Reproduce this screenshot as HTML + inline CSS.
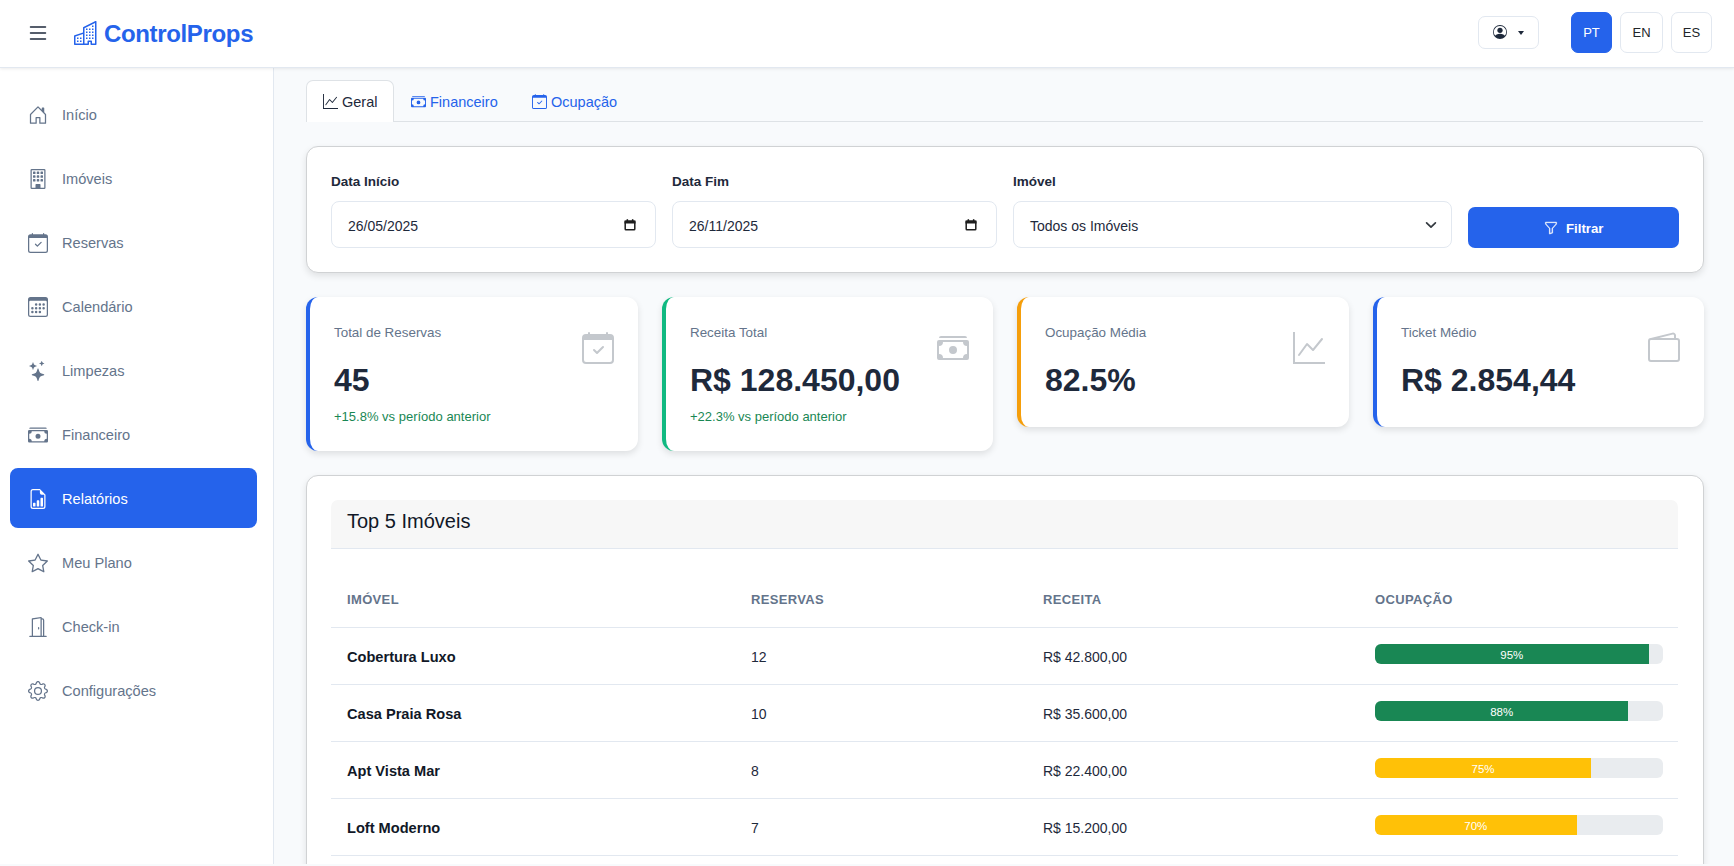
<!DOCTYPE html>
<html lang="pt">
<head>
<meta charset="utf-8">
<title>ControlProps - Relatórios</title>
<style>
*{box-sizing:border-box;margin:0;padding:0}
html,body{width:1734px;height:866px;overflow:hidden}
body{font-family:"Liberation Sans",sans-serif;background:#f8fafc;color:#1e293b;position:relative}
.abs{position:absolute}
svg{display:block}
/* header */
#hdr{position:absolute;left:0;top:0;width:1734px;height:68px;background:#fff;border-bottom:1px solid #e2e8f0;box-shadow:0 1px 3px rgba(0,0,0,.08);z-index:5}
.brand{position:absolute;left:104px;top:19px;font-size:24px;font-weight:700;color:#2563eb;letter-spacing:-0.35px;line-height:30px}
.hbtn{position:absolute;border:1px solid #e2e8f0;border-radius:7px;background:#fff;font-size:13px;color:#212529;text-align:center}
/* sidebar */
#side{position:absolute;left:0;top:68px;width:274px;height:798px;background:#fff;border-right:1px solid #e2e8f0}
.nav{position:absolute;left:10px;width:247px;height:60px;border-radius:8px;color:#64748b;font-size:14.6px}
.nav svg{position:absolute;left:18px;top:21px;width:20px;height:20px;fill:currentColor}
.nav span{position:absolute;left:52px;top:22px;line-height:18px}
.nav.active{background:#2563eb;color:#fff}
/* main */
.tabs{position:absolute;left:306px;top:121px;width:1397px;height:1px;background:#dee2e6}
.tab{position:absolute;top:80px;height:42px;font-size:15px;color:#2563eb}
.tab.active{background:#fff;border:1px solid #dee2e6;border-bottom:none;border-radius:7px 7px 0 0;color:#1e293b}
.ttxt{position:absolute;top:93px;font-size:14.5px;line-height:18px;color:#2563eb;white-space:nowrap}
.card{position:absolute;background:#fff;border:1px solid #d0d2d4;border-radius:12px;box-shadow:0 3px 7px rgba(0,0,0,.1)}
.lbl{position:absolute;top:174px;font-size:13.5px;line-height:16px;font-weight:700;color:#1e293b}
.inp{position:absolute;top:201px;height:47px;border:1px solid #e2e8f0;border-radius:8px;background:#fff;font-size:14px;color:#1e293b}
.inp span{position:absolute;left:16px;top:16px;line-height:16px}
.btnf{position:absolute;left:1468px;top:207px;width:211px;height:41px;background:#2563eb;border-radius:7px;color:#fff;font-size:13.2px;font-weight:700}
.stat{position:absolute;top:297px;background:#fff;border-radius:12px;box-shadow:0 3px 7px rgba(0,0,0,.11);border-left:4px solid #2563eb;overflow:hidden}
.stat .t{position:absolute;left:24px;top:27.5px;font-size:13.4px;color:#64748b;line-height:16px;white-space:nowrap}
.stat .v{position:absolute;left:24px;top:64px;font-size:32px;font-weight:700;color:#1e293b;line-height:38px;white-space:nowrap}
.stat .g{position:absolute;left:24px;top:112px;font-size:13px;color:#198754;line-height:16px;white-space:nowrap}
.stat svg{position:absolute;top:35px;width:32px;height:32px;fill:#c4c8cd}
.th{position:absolute;top:592px;font-size:13px;font-weight:700;color:#64748b;letter-spacing:0.35px;line-height:16px}
.row{position:absolute;left:331px;width:1347px;height:1px;background:#e2e8f0}
.cell{position:absolute;font-size:14px;color:#1e293b;line-height:16px;white-space:nowrap}
.cell.b{font-weight:700;color:#111827;font-size:14.6px}
.bar{position:absolute;left:1375px;width:288px;height:20px;background:#e9ecef;border-radius:6px;overflow:hidden}
.bar div{position:absolute;left:0;top:0;height:20px;color:#fff;font-size:11.5px;text-align:center;line-height:22px}
</style>
</head>
<body>
<div id="hdr">
  <svg class="abs" style="left:26px;top:21px" width="24" height="24" viewBox="0 0 16 16" fill="#1e293b"><path fill-rule="evenodd" d="M2.5 12a.5.5 0 0 1 .5-.5h10a.5.5 0 0 1 0 1H3a.5.5 0 0 1-.5-.5m0-4a.5.5 0 0 1 .5-.5h10a.5.5 0 0 1 0 1H3a.5.5 0 0 1-.5-.5m0-4a.5.5 0 0 1 .5-.5h10a.5.5 0 0 1 0 1H3a.5.5 0 0 1-.5-.5"/></svg>
  <svg class="abs" style="left:74px;top:21px" width="24" height="24" viewBox="0 0 16 16" fill="#2563eb"><path d="M14.763.075A.5.5 0 0 1 15 .5v15a.5.5 0 0 1-.5.5h-3a.5.5 0 0 1-.5-.5V14h-1v1.5a.5.5 0 0 1-.5.5h-9a.5.5 0 0 1-.5-.5V10a.5.5 0 0 1 .342-.474L6 7.64V4.5a.5.5 0 0 1 .276-.447l8-4a.5.5 0 0 1 .487.022M6 8.694 1 10.36V15h5zM7 15h2v-1.5a.5.5 0 0 1 .5-.5h2a.5.5 0 0 1 .5.5V15h2V1.309l-7 3.5z"/><path d="M2 11h1v1H2zm2 0h1v1H4zm-2 2h1v1H2zm2 0h1v1H4zm4-4h1v1H8zm2 0h1v1h-1zm-2 2h1v1H8zm2 0h1v1h-1zm2-2h1v1h-1zm0 2h1v1h-1zM8 7h1v1H8zm2 0h1v1h-1zm2 0h1v1h-1zM8 5h1v1H8zm2 0h1v1h-1zm2 0h1v1h-1zm0-2h1v1h-1z"/></svg>
  <div class="brand">ControlProps</div>
  <div class="hbtn" style="left:1478px;top:16px;width:61px;height:33px">
    <svg class="abs" style="left:14px;top:8px" width="14" height="14" viewBox="0 0 16 16" fill="#1e293b"><path d="M11 6a3 3 0 1 1-6 0 3 3 0 0 1 6 0"/><path fill-rule="evenodd" d="M0 8a8 8 0 1 1 16 0A8 8 0 0 1 0 8m8-7a7 7 0 0 0-5.468 11.37C3.242 11.226 4.805 10 8 10s4.757 1.225 5.468 2.37A7 7 0 0 0 8 1"/></svg>
    <div class="abs" style="left:39px;top:14px;width:0;height:0;border-left:3.5px solid transparent;border-right:3.5px solid transparent;border-top:4px solid #1e293b"></div>
  </div>
  <div class="hbtn" style="left:1571px;top:12px;width:41px;height:41px;background:#2563eb;border-color:#2563eb;color:#fff;line-height:40px">PT</div>
  <div class="hbtn" style="left:1620px;top:12px;width:43px;height:41px;line-height:40px">EN</div>
  <div class="hbtn" style="left:1671px;top:12px;width:41px;height:41px;line-height:40px">ES</div>
</div>

<div id="side">
  <div class="nav" style="top:16px"><svg viewBox="0 0 16 16"><path d="M8.354 1.146a.5.5 0 0 0-.708 0l-6 6A.5.5 0 0 0 1.5 7.5v7a.5.5 0 0 0 .5.5h4.5a.5.5 0 0 0 .5-.5v-4h2v4a.5.5 0 0 0 .5.5H14a.5.5 0 0 0 .5-.5v-7a.5.5 0 0 0-.146-.354L13 5.793V2.5a.5.5 0 0 0-.5-.5h-1a.5.5 0 0 0-.5.5v1.293zM2.5 14V7.707l5.5-5.5 5.5 5.5V14H10v-4a.5.5 0 0 0-.5-.5h-3a.5.5 0 0 0-.5.5v4z"/></svg><span>Início</span></div>
  <div class="nav" style="top:80px"><svg viewBox="0 0 16 16"><path d="M4 2.5a.5.5 0 0 1 .5-.5h1a.5.5 0 0 1 .5.5v1a.5.5 0 0 1-.5.5h-1a.5.5 0 0 1-.5-.5zm3 0a.5.5 0 0 1 .5-.5h1a.5.5 0 0 1 .5.5v1a.5.5 0 0 1-.5.5h-1a.5.5 0 0 1-.5-.5zm3.5-.5a.5.5 0 0 0-.5.5v1a.5.5 0 0 0 .5.5h1a.5.5 0 0 0 .5-.5v-1a.5.5 0 0 0-.5-.5zM4 5.5a.5.5 0 0 1 .5-.5h1a.5.5 0 0 1 .5.5v1a.5.5 0 0 1-.5.5h-1a.5.5 0 0 1-.5-.5zM7.5 5a.5.5 0 0 0-.5.5v1a.5.5 0 0 0 .5.5h1a.5.5 0 0 0 .5-.5v-1a.5.5 0 0 0-.5-.5zm2.5.5a.5.5 0 0 1 .5-.5h1a.5.5 0 0 1 .5.5v1a.5.5 0 0 1-.5.5h-1a.5.5 0 0 1-.5-.5zM4.5 8a.5.5 0 0 0-.5.5v1a.5.5 0 0 0 .5.5h1a.5.5 0 0 0 .5-.5v-1a.5.5 0 0 0-.5-.5zm2.5.5a.5.5 0 0 1 .5-.5h1a.5.5 0 0 1 .5.5v1a.5.5 0 0 1-.5.5h-1a.5.5 0 0 1-.5-.5zm3.5-.5a.5.5 0 0 0-.5.5v1a.5.5 0 0 0 .5.5h1a.5.5 0 0 0 .5-.5v-1a.5.5 0 0 0-.5-.5z"/><path d="M2 1a1 1 0 0 1 1-1h10a1 1 0 0 1 1 1v14a1 1 0 0 1-1 1H3a1 1 0 0 1-1-1zm11 0H3v14h3v-2.5a.5.5 0 0 1 .5-.5h3a.5.5 0 0 1 .5.5V15h3z"/></svg><span>Imóveis</span></div>
  <div class="nav" style="top:144px"><svg viewBox="0 0 16 16"><path d="M10.854 7.146a.5.5 0 0 1 0 .708l-3 3a.5.5 0 0 1-.708 0l-1.5-1.5a.5.5 0 1 1 .708-.708L7.5 9.793l2.646-2.647a.5.5 0 0 1 .708 0"/><path d="M3.5 0a.5.5 0 0 1 .5.5V1h8V.5a.5.5 0 0 1 1 0V1h1a2 2 0 0 1 2 2v11a2 2 0 0 1-2 2H2a2 2 0 0 1-2-2V3a2 2 0 0 1 2-2h1V.5a.5.5 0 0 1 .5-.5M1 4v10a1 1 0 0 0 1 1h12a1 1 0 0 0 1-1V4z"/></svg><span>Reservas</span></div>
  <div class="nav" style="top:208px"><svg viewBox="0 0 16 16"><path d="M14 0H2a2 2 0 0 0-2 2v12a2 2 0 0 0 2 2h12a2 2 0 0 0 2-2V2a2 2 0 0 0-2-2M1 3.857C1 3.384 1.448 3 2 3h12c.552 0 1 .384 1 .857v10.286c0 .473-.448.857-1 .857H2c-.552 0-1-.384-1-.857z"/><path d="M6.5 7a1 1 0 1 0 0-2 1 1 0 0 0 0 2m3 0a1 1 0 1 0 0-2 1 1 0 0 0 0 2m3 0a1 1 0 1 0 0-2 1 1 0 0 0 0 2m-9 3a1 1 0 1 0 0-2 1 1 0 0 0 0 2m3 0a1 1 0 1 0 0-2 1 1 0 0 0 0 2m3 0a1 1 0 1 0 0-2 1 1 0 0 0 0 2m3 0a1 1 0 1 0 0-2 1 1 0 0 0 0 2m-9 3a1 1 0 1 0 0-2 1 1 0 0 0 0 2m3 0a1 1 0 1 0 0-2 1 1 0 0 0 0 2m3 0a1 1 0 1 0 0-2 1 1 0 0 0 0 2"/></svg><span>Calendário</span></div>
  <div class="nav" style="top:272px"><svg viewBox="0 0 16 16"><path d="M7.657 6.247c.11-.33.576-.33.686 0l.645 1.937a2.89 2.89 0 0 0 1.829 1.828l1.936.645c.33.11.33.576 0 .686l-1.937.645a2.89 2.89 0 0 0-1.828 1.829l-.645 1.936a.361.361 0 0 1-.686 0l-.645-1.937a2.890 2.890 0 0 0-1.828-1.828l-1.937-.645a.361.361 0 0 1 0-.686l1.937-.645a2.89 2.89 0 0 0 1.828-1.828zM3.794 1.148a.217.217 0 0 1 .412 0l.387 1.162c.173.518.579.924 1.097 1.097l1.162.387a.217.217 0 0 1 0 .412l-1.162.387A1.73 1.73 0 0 0 4.593 5.690l-.387 1.162a.217.217 0 0 1-.412 0L3.407 5.690A1.73 1.73 0 0 0 2.310 4.593l-1.162-.387a.217.217 0 0 1 0-.412l1.162-.387A1.73 1.73 0 0 0 3.407 2.310zM10.863.099a.145.145 0 0 1 .274 0l.258.774c.115.346.386.617.732.732l.774.258a.145.145 0 0 1 0 .274l-.774.258a1.16 1.16 0 0 0-.732.732l-.258.774a.145.145 0 0 1-.274 0l-.258-.774a1.16 1.16 0 0 0-.732-.732L9.1 2.137a.145.145 0 0 1 0-.274l.774-.258c.346-.115.617-.386.732-.732z"/></svg><span>Limpezas</span></div>
  <div class="nav" style="top:336px"><svg viewBox="0 0 16 16"><path d="M1 3a1 1 0 0 1 1-1h12a1 1 0 0 1 1 1zm7 8a2 2 0 1 0 0-4 2 2 0 0 0 0 4"/><path d="M0 5a1 1 0 0 1 1-1h14a1 1 0 0 1 1 1v8a1 1 0 0 1-1 1H1a1 1 0 0 1-1-1zm3 0a2 2 0 0 1-2 2v4a2 2 0 0 1 2 2h10a2 2 0 0 1 2-2V7a2 2 0 0 1-2-2z"/></svg><span>Financeiro</span></div>
  <div class="nav active" style="top:400px"><svg viewBox="0 0 16 16"><path d="M10 13.5a.5.5 0 0 0 .5.5h1a.5.5 0 0 0 .5-.5v-6a.5.5 0 0 0-.5-.5h-1a.5.5 0 0 0-.5.5zm-2.5.5a.5.5 0 0 1-.5-.5v-4a.5.5 0 0 1 .5-.5h1a.5.5 0 0 1 .5.5v4a.5.5 0 0 1-.5.5zm-3 0a.5.5 0 0 1-.5-.5v-2a.5.5 0 0 1 .5-.5h1a.5.5 0 0 1 .5.5v2a.5.5 0 0 1-.5.5z"/><path d="M14 14V4.5L9.5 0H4a2 2 0 0 0-2 2v12a2 2 0 0 0 2 2h8a2 2 0 0 0 2-2M9.5 3A1.5 1.5 0 0 0 11 4.5h2V14a1 1 0 0 1-1 1H4a1 1 0 0 1-1-1V2a1 1 0 0 1 1-1h5.5z"/></svg><span>Relatórios</span></div>
  <div class="nav" style="top:464px"><svg viewBox="0 0 16 16"><path d="M2.866 14.85c-.078.444.36.791.746.593l4.39-2.256 4.389 2.256c.386.198.824-.149.746-.592l-.83-4.73 3.522-3.356c.33-.314.16-.888-.282-.95l-4.898-.696L8.465.792a.513.513 0 0 0-.927 0L5.354 5.12l-4.898.696c-.441.062-.612.636-.283.95l3.523 3.356-.83 4.73zm4.905-2.767-3.686 1.894.694-3.957a.56.56 0 0 0-.163-.505L1.71 6.745l4.052-.576a.53.53 0 0 0 .393-.288L8 2.223l1.847 3.658a.53.53 0 0 0 .393.288l4.052.575-2.906 2.77a.56.56 0 0 0-.163.506l.694 3.957-3.686-1.894a.5.5 0 0 0-.461 0z"/></svg><span>Meu Plano</span></div>
  <div class="nav" style="top:528px"><svg viewBox="0 0 16 16"><path d="M8.5 10c-.276 0-.5-.448-.5-1s.224-1 .5-1 .5.448.5 1-.224 1-.5 1"/><path d="M10.828.122A.5.5 0 0 1 11 .5V1h.5A1.5 1.5 0 0 1 13 2.5V15h1.5a.5.5 0 0 1 0 1h-13a.5.5 0 0 1 0-1H3V1.5a.5.5 0 0 1 .43-.495l7-1a.5.5 0 0 1 .398.117M11.5 2H11v13h1V2.5a.5.5 0 0 0-.5-.5M4 1.934V15h6V1.077z"/></svg><span>Check-in</span></div>
  <div class="nav" style="top:592px"><svg viewBox="0 0 16 16"><path d="M8 4.754a3.246 3.246 0 1 0 0 6.492 3.246 3.246 0 0 0 0-6.492M5.754 8a2.246 2.246 0 1 1 4.492 0 2.246 2.246 0 0 1-4.492 0"/><path d="M9.796 1.343c-.527-1.79-3.065-1.79-3.592 0l-.094.319a.873.873 0 0 1-1.255.52l-.292-.16c-1.64-.892-3.433.902-2.54 2.541l.159.292a.873.873 0 0 1-.52 1.255l-.319.094c-1.79.527-1.79 3.065 0 3.592l.319.094a.873.873 0 0 1 .52 1.255l-.16.292c-.892 1.64.901 3.434 2.541 2.54l.292-.159a.873.873 0 0 1 1.255.52l.094.319c.527 1.79 3.065 1.790 3.592 0l.094-.319a.873.873 0 0 1 1.255-.52l.292.16c1.64.893 3.434-.902 2.54-2.541l-.159-.292a.873.873 0 0 1 .52-1.255l.319-.094c1.79-.527 1.79-3.065 0-3.592l-.319-.094a.873.873 0 0 1-.52-1.255l.16-.292c.893-1.64-.902-3.433-2.541-2.54l-.292.159a.873.873 0 0 1-1.255-.52zm-2.633.283c.246-.835 1.428-.835 1.674 0l.094.319a1.873 1.873 0 0 0 2.693 1.115l.291-.16c.764-.415 1.6.42 1.184 1.185l-.159.292a1.873 1.873 0 0 0 1.116 2.692l.318.094c.835.246.835 1.428 0 1.674l-.319.094a1.873 1.873 0 0 0-1.115 2.693l.16.291c.415.764-.42 1.6-1.185 1.184l-.291-.159a1.873 1.873 0 0 0-2.693 1.116l-.094.318c-.246.835-1.428.835-1.674 0l-.094-.319a1.873 1.873 0 0 0-2.692-1.115l-.292.16c-.764.415-1.6-.42-1.184-1.185l.159-.291A1.873 1.873 0 0 0 1.945 8.93l-.319-.094c-.835-.246-.835-1.428 0-1.674l.319-.094A1.873 1.873 0 0 0 3.06 4.377l-.16-.292c-.415-.764.42-1.6 1.185-1.184l.292.159a1.873 1.873 0 0 0 2.692-1.115z"/></svg><span>Configurações</span></div>
</div>
<!-- tabs -->
<div class="tabs"></div>
<div class="tab active" style="left:306px;width:88px"></div>
<svg class="abs" style="left:323px;top:94px" width="15" height="15" viewBox="0 0 16 16" fill="#1e293b"><path fill-rule="evenodd" d="M0 0h1v15h15v1H0zm14.817 3.113a.5.5 0 0 1 .07.704l-4.5 5.5a.5.5 0 0 1-.74.037L7.06 6.767l-3.656 5.027a.5.5 0 0 1-.808-.588l4-5.5a.5.5 0 0 1 .758-.06l2.609 2.61 4.15-5.073a.5.5 0 0 1 .704-.07"/></svg>
<div class="ttxt" style="left:342px;color:#1e293b">Geral</div>
<svg class="abs" style="left:411px;top:94px" width="15" height="15" viewBox="0 0 16 16" fill="#2563eb"><path d="M1 3a1 1 0 0 1 1-1h12a1 1 0 0 1 1 1zm7 8a2 2 0 1 0 0-4 2 2 0 0 0 0 4"/><path d="M0 5a1 1 0 0 1 1-1h14a1 1 0 0 1 1 1v8a1 1 0 0 1-1 1H1a1 1 0 0 1-1-1zm3 0a2 2 0 0 1-2 2v4a2 2 0 0 1 2 2h10a2 2 0 0 1 2-2V7a2 2 0 0 1-2-2z"/></svg>
<div class="ttxt" style="left:430px">Financeiro</div>
<svg class="abs" style="left:532px;top:94px" width="15" height="15" viewBox="0 0 16 16" fill="#2563eb"><path d="M10.854 7.146a.5.5 0 0 1 0 .708l-3 3a.5.5 0 0 1-.708 0l-1.5-1.5a.5.5 0 1 1 .708-.708L7.5 9.793l2.646-2.647a.5.5 0 0 1 .708 0"/><path d="M3.5 0a.5.5 0 0 1 .5.5V1h8V.5a.5.5 0 0 1 1 0V1h1a2 2 0 0 1 2 2v11a2 2 0 0 1-2 2H2a2 2 0 0 1-2-2V3a2 2 0 0 1 2-2h1V.5a.5.5 0 0 1 .5-.5M1 4v10a1 1 0 0 0 1 1h12a1 1 0 0 0 1-1V4z"/></svg>
<div class="ttxt" style="left:551px">Ocupação</div>

<!-- filter card -->
<div class="card" style="left:306px;top:146px;width:1398px;height:127px"></div>
<div class="lbl" style="left:331px">Data Início</div>
<div class="lbl" style="left:672px">Data Fim</div>
<div class="lbl" style="left:1013px">Imóvel</div>
<div class="inp" style="left:331px;width:325px"><span>26/05/2025</span>
  <svg class="abs" style="left:291px;top:15.5px" width="14" height="14" viewBox="0 0 14 14"><rect x="2.2" y="3.2" width="9.6" height="8.6" rx="0.8" fill="none" stroke="#1e1e1e" stroke-width="1.5"/><rect x="1.5" y="2.5" width="11" height="3" fill="#1e1e1e"/><rect x="3.6" y="1.2" width="1.5" height="2" fill="#1e1e1e"/><rect x="8.9" y="1.2" width="1.5" height="2" fill="#1e1e1e"/></svg></div>
<div class="inp" style="left:672px;width:325px"><span>26/11/2025</span>
  <svg class="abs" style="left:291px;top:15.5px" width="14" height="14" viewBox="0 0 14 14"><rect x="2.2" y="3.2" width="9.6" height="8.6" rx="0.8" fill="none" stroke="#1e1e1e" stroke-width="1.5"/><rect x="1.5" y="2.5" width="11" height="3" fill="#1e1e1e"/><rect x="3.6" y="1.2" width="1.5" height="2" fill="#1e1e1e"/><rect x="8.9" y="1.2" width="1.5" height="2" fill="#1e1e1e"/></svg></div>
<div class="inp" style="left:1013px;width:439px"><span>Todos os Imóveis</span>
  <svg class="abs" style="left:409px;top:17px" width="16" height="12" viewBox="0 0 16 12"><path d="M3.6 3.8L8 8.2L12.4 3.8" fill="none" stroke="#343a40" stroke-width="1.7" stroke-linecap="round" stroke-linejoin="round"/></svg></div>
<div class="btnf">
  <svg class="abs" style="left:76px;top:13.5px" width="14" height="14" viewBox="0 0 16 16" fill="#fff" stroke="#fff" stroke-width="0.35"><path d="M1.5 1.5A.5.5 0 0 1 2 1h12a.5.5 0 0 1 .5.5v2a.5.5 0 0 1-.128.334L10 8.692V13.5a.5.5 0 0 1-.342.474l-3 1A.5.5 0 0 1 6 14.5V8.692L1.628 3.834A.5.5 0 0 1 1.5 3.5zm1 .5v1.308l4.372 4.858A.5.5 0 0 1 7 8.5v5.306l2-.666V8.5a.5.5 0 0 1 .128-.334L13.5 3.308V2z"/></svg>
  <span class="abs" style="left:98px;top:14px;line-height:16px">Filtrar</span>
</div>

<!-- stat cards -->
<div class="stat" style="left:306px;width:332px;height:154px">
  <div class="t">Total de Reservas</div><div class="v">45</div><div class="g">+15.8% vs período anterior</div>
  <svg style="left:272px" viewBox="0 0 16 16"><path d="M10.854 7.146a.5.5 0 0 1 0 .708l-3 3a.5.5 0 0 1-.708 0l-1.5-1.5a.5.5 0 1 1 .708-.708L7.5 9.793l2.646-2.647a.5.5 0 0 1 .708 0"/><path d="M3.5 0a.5.5 0 0 1 .5.5V1h8V.5a.5.5 0 0 1 1 0V1h1a2 2 0 0 1 2 2v11a2 2 0 0 1-2 2H2a2 2 0 0 1-2-2V3a2 2 0 0 1 2-2h1V.5a.5.5 0 0 1 .5-.5M1 4v10a1 1 0 0 0 1 1h12a1 1 0 0 0 1-1V4z"/></svg>
</div>
<div class="stat" style="left:662px;width:331px;height:154px;border-left-color:#10b981">
  <div class="t">Receita Total</div><div class="v">R$ 128.450,00</div><div class="g">+22.3% vs período anterior</div>
  <svg style="left:271px" viewBox="0 0 16 16"><path d="M1 3a1 1 0 0 1 1-1h12a1 1 0 0 1 1 1zm7 8a2 2 0 1 0 0-4 2 2 0 0 0 0 4"/><path d="M0 5a1 1 0 0 1 1-1h14a1 1 0 0 1 1 1v8a1 1 0 0 1-1 1H1a1 1 0 0 1-1-1zm3 0a2 2 0 0 1-2 2v4a2 2 0 0 1 2 2h10a2 2 0 0 1 2-2V7a2 2 0 0 1-2-2z"/></svg>
</div>
<div class="stat" style="left:1017px;width:332px;height:130px;border-left-color:#f59e0b">
  <div class="t">Ocupação Média</div><div class="v">82.5%</div>
  <svg style="left:272px" viewBox="0 0 16 16"><path fill-rule="evenodd" d="M0 0h1v15h15v1H0zm14.817 3.113a.5.5 0 0 1 .07.704l-4.5 5.5a.5.5 0 0 1-.74.037L7.06 6.767l-3.656 5.027a.5.5 0 0 1-.808-.588l4-5.5a.5.5 0 0 1 .758-.06l2.609 2.61 4.15-5.073a.5.5 0 0 1 .704-.07"/></svg>
</div>
<div class="stat" style="left:1373px;width:331px;height:130px">
  <div class="t">Ticket Médio</div><div class="v">R$ 2.854,44</div>
  <svg style="left:271px" viewBox="0 0 16 16"><path d="M12.136.326A1.5 1.5 0 0 1 14 1.78V3h.5A1.5 1.5 0 0 1 16 4.5v9a1.5 1.5 0 0 1-1.5 1.5h-13A1.5 1.5 0 0 1 0 13.5v-9a1.5 1.5 0 0 1 1.432-1.499zM5.562 3H13V1.78a.5.5 0 0 0-.621-.484zM1.5 4a.5.5 0 0 0-.5.5v9a.5.5 0 0 0 .5.5h13a.5.5 0 0 0 .5-.5v-9a.5.5 0 0 0-.5-.5z"/></svg>
</div>

<!-- table card -->
<div class="card" style="left:306px;top:475px;width:1398px;height:420px"></div>
<div class="abs" style="left:331px;top:500px;width:1347px;height:49px;background:#f7f7f7;border-bottom:1px solid #e2e8f0;border-radius:7px 7px 0 0"></div>
<div class="abs" style="left:347px;top:510px;font-size:20px;line-height:23px;color:#111827">Top 5 Imóveis</div>
<div class="th" style="left:347px">IMÓVEL</div>
<div class="th" style="left:751px">RESERVAS</div>
<div class="th" style="left:1043px">RECEITA</div>
<div class="th" style="left:1375px">OCUPAÇÃO</div>
<div class="row" style="top:627px"></div>
<div class="cell b" style="left:347px;top:649px">Cobertura Luxo</div>
<div class="cell" style="left:751px;top:649px">12</div>
<div class="cell" style="left:1043px;top:649px">R$ 42.800,00</div>
<div class="bar" style="top:644px"><div style="width:95%;background:#198754">95%</div></div>
<div class="row" style="top:684px"></div>
<div class="cell b" style="left:347px;top:706px">Casa Praia Rosa</div>
<div class="cell" style="left:751px;top:706px">10</div>
<div class="cell" style="left:1043px;top:706px">R$ 35.600,00</div>
<div class="bar" style="top:701px"><div style="width:88%;background:#198754">88%</div></div>
<div class="row" style="top:741px"></div>
<div class="cell b" style="left:347px;top:763px">Apt Vista Mar</div>
<div class="cell" style="left:751px;top:763px">8</div>
<div class="cell" style="left:1043px;top:763px">R$ 22.400,00</div>
<div class="bar" style="top:758px"><div style="width:75%;background:#ffc107">75%</div></div>
<div class="row" style="top:798px"></div>
<div class="cell b" style="left:347px;top:820px">Loft Moderno</div>
<div class="cell" style="left:751px;top:820px">7</div>
<div class="cell" style="left:1043px;top:820px">R$ 15.200,00</div>
<div class="bar" style="top:815px"><div style="width:70%;background:#ffc107">70%</div></div>
<div class="row" style="top:855px"></div>
<div class="abs" style="left:0;top:864px;width:1734px;height:2px;background:#f8fafc;z-index:10"></div>

</body>
</html>
